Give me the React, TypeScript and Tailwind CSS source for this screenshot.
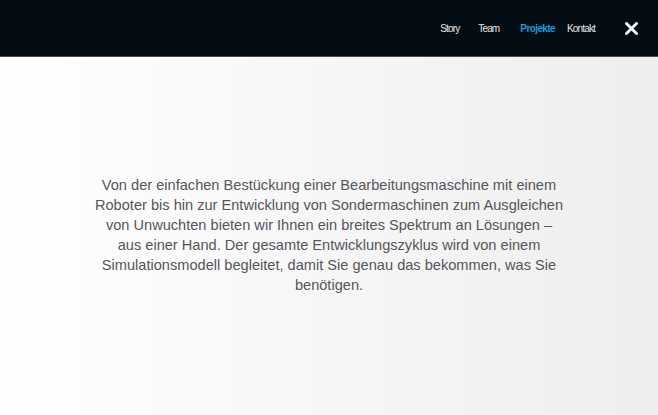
import React from 'react';

const App: React.FC = () => {
  return (
    <div
      className="w-[658px] h-[415px] flex flex-col overflow-hidden bg-gradient-to-r from-white to-[#eeeeee]"
      style={{ fontFamily: '"Liberation Sans", Arial, sans-serif' }}
    >
      {/* Header */}
      <header className="h-[57px] shrink-0 bg-[#050d14] border-b border-[#4a4d50] flex items-center justify-end pr-[20px]">
        <nav className="flex items-center text-[10px] tracking-[-0.85px] text-[#e6e6e6]">
          <span>Story</span>
          <span className="ml-[19px]">Team</span>
          <span className="ml-[21px] font-bold text-[#1d9ad9] tracking-[-0.6px]">Projekte</span>
          <span className="ml-[12px]">Kontakt</span>
        </nav>
        <button className="ml-[30px] w-[13px] h-[13px] flex items-center justify-center">
          <svg viewBox="0 0 13 13" className="w-[13px] h-[13px]" stroke="white" strokeWidth="2.8" strokeLinecap="square">
            <path d="M1.5 1.5 L11.5 11.5 M11.5 1.5 L1.5 11.5" />
          </svg>
        </button>
      </header>

      <main className="flex-1 flex justify-center pt-[118px]">
        <p className="whitespace-nowrap text-center text-[14.6px] leading-[20px] text-[#55555c]">
          Von der einfachen Bestückung einer Bearbeitungsmaschine mit einem
          <br />
          Roboter bis hin zur Entwicklung von Sondermaschinen zum Ausgleichen
          <br />
          von Unwuchten bieten wir Ihnen ein breites Spektrum an Lösungen –
          <br />
          aus einer Hand. Der gesamte Entwicklungszyklus wird von einem
          <br />
          Simulationsmodell begleitet, damit Sie genau das bekommen, was Sie
          <br />
          benötigen.
        </p>
      </main>
    </div>
  );
};

export default App;
